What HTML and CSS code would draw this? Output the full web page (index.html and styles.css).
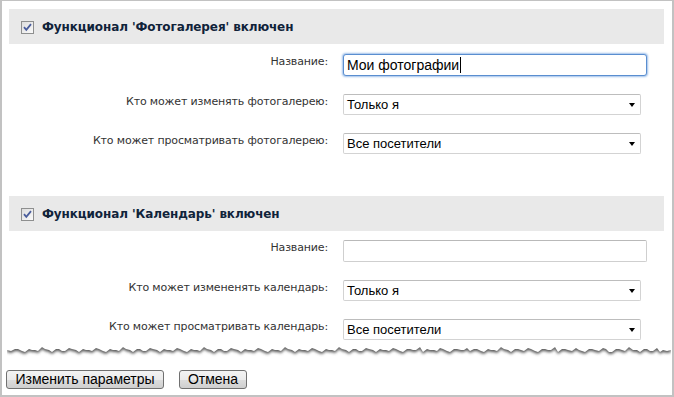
FILE: index.html
```html
<!DOCTYPE html>
<html lang="ru">
<head>
<meta charset="utf-8">
<title>Настройки</title>
<link rel="stylesheet" href="styles.css">
</head>
<body>
<div class="frame">
  <section class="section">
    <div class="section-head">
      <svg class="check" width="13" height="13" viewBox="0 0 13 13" aria-hidden="true">
        <defs><linearGradient id="cb" x1="0" y1="0" x2="1" y2="1"><stop offset="0" stop-color="#dcdcdc"/><stop offset="1" stop-color="#fbfbfb"/></linearGradient></defs>
        <rect x="0.5" y="0.5" width="12" height="12" fill="url(#cb)" stroke="#8e8f8f"/>
        <path d="M3 6.2 L5.3 8.8 L10 3.2" fill="none" stroke="#4a5d9c" stroke-width="1.8"/>
      </svg>
      <span class="head-text">Функционал 'Фотогалерея' включен</span>
    </div>
    <div class="rows">
      <div class="row">
        <label class="lbl">Название:</label>
        <div class="field focused">Мои фотографии<span class="caret"></span></div>
      </div>
      <div class="row">
        <label class="lbl">Кто может изменять фотогалерею:</label>
        <div class="select"><span>Только я</span><i class="arrow"></i></div>
      </div>
      <div class="row">
        <label class="lbl">Кто может просматривать фотогалерею:</label>
        <div class="select"><span>Все посетители</span><i class="arrow"></i></div>
      </div>
    </div>
  </section>

  <section class="section second">
    <div class="section-head">
      <svg class="check" width="13" height="13" viewBox="0 0 13 13" aria-hidden="true">
        <rect x="0.5" y="0.5" width="12" height="12" fill="url(#cb)" stroke="#8e8f8f"/>
        <path d="M3 6.2 L5.3 8.8 L10 3.2" fill="none" stroke="#4a5d9c" stroke-width="1.8"/>
      </svg>
      <span class="head-text">Функционал 'Календарь' включен</span>
    </div>
    <div class="rows">
      <div class="row">
        <label class="lbl">Название:</label>
        <div class="field"></div>
      </div>
      <div class="row">
        <label class="lbl">Кто может измененять календарь:</label>
        <div class="select"><span>Только я</span><i class="arrow"></i></div>
      </div>
      <div class="row">
        <label class="lbl">Кто может просматривать календарь:</label>
        <div class="select"><span>Все посетители</span><i class="arrow"></i></div>
      </div>
    </div>
  </section>

  <svg class="torn" width="664" height="16" viewBox="0 0 664 16" aria-hidden="true">
    <defs><filter id="blur" x="-5%" y="-50%" width="110%" height="200%"><feGaussianBlur stdDeviation="1.4"/></filter></defs>
    <path filter="url(#blur)" fill="#555555" transform="translate(0,2)" d="M0,0 H664 V6 L660,7 L656,6 L653,8 L650,4 L646,7 L643,7 L640,5 L637,5 L633,8 L630,6 L626,6 L622,3 L618,7 L615,6 L612,5 L609,5 L605,8 L602,8 L599,5 L596,4 L592,7 L588,6 L585,5 L582,5 L578,8 L575,7 L572,6 L569,4 L565,7 L561,6 L558,5 L555,5 L551,8 L548,3 L544,6 L541,6 L538,5 L535,5 L531,8 L528,7 L524,5 L521,4 L517,7 L514,6 L511,5 L508,5 L504,8 L501,6 L497,5 L494,3 L490,7 L487,6 L484,6 L481,5 L477,8 L474,7 L470,5 L467,5 L463,7 L460,4 L457,6 L454,6 L450,5 L447,5 L443,8 L440,7 L436,5 L433,4 L430,7 L427,6 L423,6 L420,5 L416,8 L413,3 L409,6 L406,6 L403,5 L400,5 L396,8 L393,7 L389,5 L386,4 L382,7 L379,6 L376,6 L373,5 L369,8 L366,6 L362,5 L359,4 L355,7 L352,7 L349,5 L346,5 L342,8 L339,6 L335,5 L332,3 L328,7 L325,6 L322,6 L319,5 L315,8 L312,7 L308,5 L305,4 L301,7 L298,6 L295,6 L292,5 L288,8 L285,6 L281,5 L278,3 L274,7 L271,6 L268,6 L265,5 L261,8 L258,7 L254,5 L251,4 L247,7 L244,6 L241,6 L238,5 L234,8 L231,6 L227,5 L224,4 L220,7 L217,7 L214,5 L211,5 L207,8 L204,6 L200,5 L197,3 L193,7 L190,6 L187,6 L184,5 L180,8 L177,7 L173,5 L170,4 L166,7 L163,6 L160,6 L157,5 L153,8 L150,6 L146,5 L143,4 L139,7 L136,7 L133,5 L130,5 L126,8 L123,6 L119,5 L116,3 L112,7 L109,6 L106,6 L103,5 L99,8 L96,7 L92,5 L89,4 L85,7 L82,6 L79,6 L76,5 L72,8 L69,6 L65,5 L62,4 L58,7 L55,7 L52,5 L49,5 L45,8 L42,6 L38,5 L35,3 L31,7 L28,6 L25,6 L22,5 L18,8 L15,7 L11,5 L8,5 L4,7 L0,6 Z"/>
    <path fill="#ffffff" d="M0,0 H664 V6 L660,7 L656,6 L653,8 L650,4 L646,7 L643,7 L640,5 L637,5 L633,8 L630,6 L626,6 L622,3 L618,7 L615,6 L612,5 L609,5 L605,8 L602,8 L599,5 L596,4 L592,7 L588,6 L585,5 L582,5 L578,8 L575,7 L572,6 L569,4 L565,7 L561,6 L558,5 L555,5 L551,8 L548,3 L544,6 L541,6 L538,5 L535,5 L531,8 L528,7 L524,5 L521,4 L517,7 L514,6 L511,5 L508,5 L504,8 L501,6 L497,5 L494,3 L490,7 L487,6 L484,6 L481,5 L477,8 L474,7 L470,5 L467,5 L463,7 L460,4 L457,6 L454,6 L450,5 L447,5 L443,8 L440,7 L436,5 L433,4 L430,7 L427,6 L423,6 L420,5 L416,8 L413,3 L409,6 L406,6 L403,5 L400,5 L396,8 L393,7 L389,5 L386,4 L382,7 L379,6 L376,6 L373,5 L369,8 L366,6 L362,5 L359,4 L355,7 L352,7 L349,5 L346,5 L342,8 L339,6 L335,5 L332,3 L328,7 L325,6 L322,6 L319,5 L315,8 L312,7 L308,5 L305,4 L301,7 L298,6 L295,6 L292,5 L288,8 L285,6 L281,5 L278,3 L274,7 L271,6 L268,6 L265,5 L261,8 L258,7 L254,5 L251,4 L247,7 L244,6 L241,6 L238,5 L234,8 L231,6 L227,5 L224,4 L220,7 L217,7 L214,5 L211,5 L207,8 L204,6 L200,5 L197,3 L193,7 L190,6 L187,6 L184,5 L180,8 L177,7 L173,5 L170,4 L166,7 L163,6 L160,6 L157,5 L153,8 L150,6 L146,5 L143,4 L139,7 L136,7 L133,5 L130,5 L126,8 L123,6 L119,5 L116,3 L112,7 L109,6 L106,6 L103,5 L99,8 L96,7 L92,5 L89,4 L85,7 L82,6 L79,6 L76,5 L72,8 L69,6 L65,5 L62,4 L58,7 L55,7 L52,5 L49,5 L45,8 L42,6 L38,5 L35,3 L31,7 L28,6 L25,6 L22,5 L18,8 L15,7 L11,5 L8,5 L4,7 L0,6 Z"/>
  </svg>

  <div class="actions">
    <button class="btn btn-save" type="button">Изменить параметры</button>
    <button class="btn btn-cancel" type="button">Отмена</button>
  </div>
</div>
</body>
</html>
```

FILE: styles.css
```css
html, body {
  margin: 0;
  padding: 0;
  background: #ffffff;
}

body {
  font-family: "DejaVu Sans", Verdana, sans-serif;
  color: #333333;
}

.frame {
  width: 674px;
  height: 397px;
  box-sizing: border-box;
  border: 2px solid #c2c2c2;
  border-top-width: 1px;
  padding: 8px 8px 0 4px;
  display: flex;
  flex-direction: column;
}

.section {
  margin-left: 3px;
}

.section.second {
  margin-top: 42px;
}

.section-head {
  height: 35px;
  background: #e9e9e9;
  display: flex;
  align-items: center;
  padding-left: 12px;
  gap: 8px;
}

.check {
  display: block;
  flex: none;
  margin-top: 1px;
}

.head-text {
  font-size: 12px;
  font-weight: bold;
  color: #10233a;
  letter-spacing: -0.1px;
}

.rows {
  display: flex;
  flex-direction: column;
  gap: 18px;
  padding-top: 10px;
}

.second .rows {
  padding-top: 9px;
}

.row {
  display: flex;
  align-items: flex-start;
}

.lbl {
  width: 319px;
  flex: none;
  text-align: right;
  font-size: 11px;
  line-height: 13px;
  padding-top: 1px;
  letter-spacing: -0.15px;
  color: #333333;
}

.field,
.select {
  margin-left: 15px;
  box-sizing: border-box;
  font-family: "Liberation Sans", Arial, sans-serif;
  color: #000000;
  background: #ffffff;
}

.field {
  width: 304px;
  height: 22px;
  border: 1px solid #cfcfcf;
  border-top-color: #b9b9b9;
  border-radius: 2px;
  font-size: 14px;
  line-height: 20px;
  padding-left: 3px;
}

.field.focused {
  border-color: #5a8ed0;
  box-shadow: 0 0 2px 1px #9fc0ea;
  border-radius: 3px;
}

.caret {
  display: inline-block;
  width: 1px;
  height: 16px;
  background: #000000;
  vertical-align: -3px;
  margin-left: 1px;
}

.select {
  width: 298px;
  height: 21px;
  border: 1px solid #d3d3d3;
  border-top-color: #bdbdbd;
  border-radius: 2px;
  font-size: 13px;
  display: flex;
  align-items: center;
  justify-content: space-between;
  padding: 0 5px 0 3px;
}

.arrow {
  width: 0;
  height: 0;
  border-left: 3.5px solid transparent;
  border-right: 3.5px solid transparent;
  border-top: 4px solid #000000;
  margin-top: 1px;
}

.torn {
  display: block;
  margin-top: 4px;
  margin-left: 1px;
}

.actions {
  display: flex;
  gap: 15px;
  margin-top: 10px;
}

.btn {
  height: 19px;
  box-sizing: border-box;
  border: 1px solid #707070;
  border-radius: 3px;
  background: linear-gradient(#f3f3f3 0%, #ebebeb 50%, #dddddd 51%, #cfcfcf 100%);
  font-family: "Liberation Sans", Arial, sans-serif;
  font-size: 14px;
  line-height: 17px;
  color: #000000;
  padding: 0;
  text-align: center;
}

.btn-save {
  width: 158px;
}

.btn-cancel {
  width: 68px;
}
```
